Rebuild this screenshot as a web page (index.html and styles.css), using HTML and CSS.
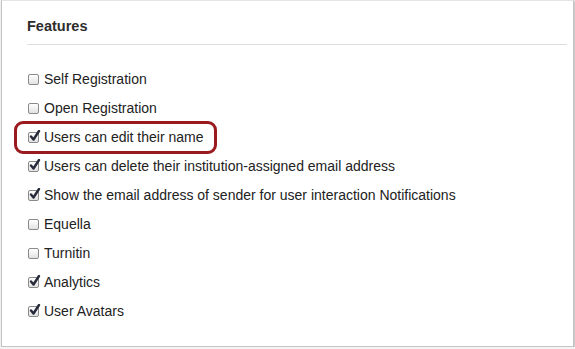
FILE: index.html
```html
<!DOCTYPE html>
<html lang="en">
<head>
    <meta charset="UTF-8">
    <title>Features</title>
    <link rel="stylesheet" href="styles.css">
</head>
<body>
    <div id="panel">
        <h2 class="title">Features</h2>
        <ul class="features">
            <li><label class="opt"><span class="box"></span>Self Registration</label></li>
            <li><label class="opt"><span class="box"></span>Open Registration</label></li>
            <li><label class="opt highlight"><span class="box checked"><svg viewBox="0 0 13 13"><path d="M3 6.5 L5.5 9.5 L11 1"/></svg></span>Users can edit their name</label></li>
            <li><label class="opt"><span class="box checked"><svg viewBox="0 0 13 13"><path d="M3 6.5 L5.5 9.5 L11 1"/></svg></span>Users can delete their institution-assigned email address</label></li>
            <li><label class="opt"><span class="box checked"><svg viewBox="0 0 13 13"><path d="M3 6.5 L5.5 9.5 L11 1"/></svg></span>Show the email address of sender for user interaction Notifications</label></li>
            <li><label class="opt"><span class="box"></span>Equella</label></li>
            <li><label class="opt"><span class="box"></span>Turnitin</label></li>
            <li><label class="opt"><span class="box checked"><svg viewBox="0 0 13 13"><path d="M3 6.5 L5.5 9.5 L11 1"/></svg></span>Analytics</label></li>
            <li><label class="opt"><span class="box checked"><svg viewBox="0 0 13 13"><path d="M3 6.5 L5.5 9.5 L11 1"/></svg></span>User Avatars</label></li>
        </ul>
    </div>
</body>
</html>
```

FILE: styles.css
```css
body {
    margin: 0;
    background-color: #f4f4f4;
    font-family: "Liberation Sans", Arial, sans-serif;
    color: #222;
}

#panel {
    box-sizing: border-box;
    width: 573px;
    height: 347px;
    margin-left: 1px;
    padding: 0 6px 0 25px;
    background-color: #fff;
    border: 1px solid #c4c4c4;
    border-top-color: #e4e4e4;
    box-shadow: 1px 1px 2px rgba(0, 0, 0, 0.25);
}

.title {
    margin: 0;
    padding-top: 15px;
    padding-bottom: 8px;
    line-height: 20px;
    font-size: 14.5px;
    font-weight: bold;
    color: #2d2d2d;
    border-bottom: 1px solid #dedede;
}

.features {
    list-style: none;
    margin: 20px 0 0;
    padding: 0;
}

.features li {
    height: 29px;
    display: flex;
    align-items: center;
}

.opt {
    position: relative;
    display: inline-flex;
    align-items: center;
    gap: 5px;
    padding-left: 1px;
    font-size: 14px;
    line-height: 17px;
}

.box {
    position: relative;
    box-sizing: border-box;
    width: 11px;
    height: 11px;
    border: 1px solid #8a8a8a;
    border-radius: 2px;
    background: linear-gradient(#ffffff, #e2e2e2);
}

.box svg {
    position: absolute;
    left: -1px;
    top: -3px;
    width: 13px;
    height: 13px;
    fill: none;
    stroke: #262a3a;
    stroke-width: 2.4;
    stroke-linecap: round;
    stroke-linejoin: round;
}

.highlight::after {
    content: "";
    position: absolute;
    left: -13px;
    right: -13px;
    top: -8px;
    bottom: -8px;
    border: 3px solid #9a1a1f;
    border-radius: 9px;
}
```
